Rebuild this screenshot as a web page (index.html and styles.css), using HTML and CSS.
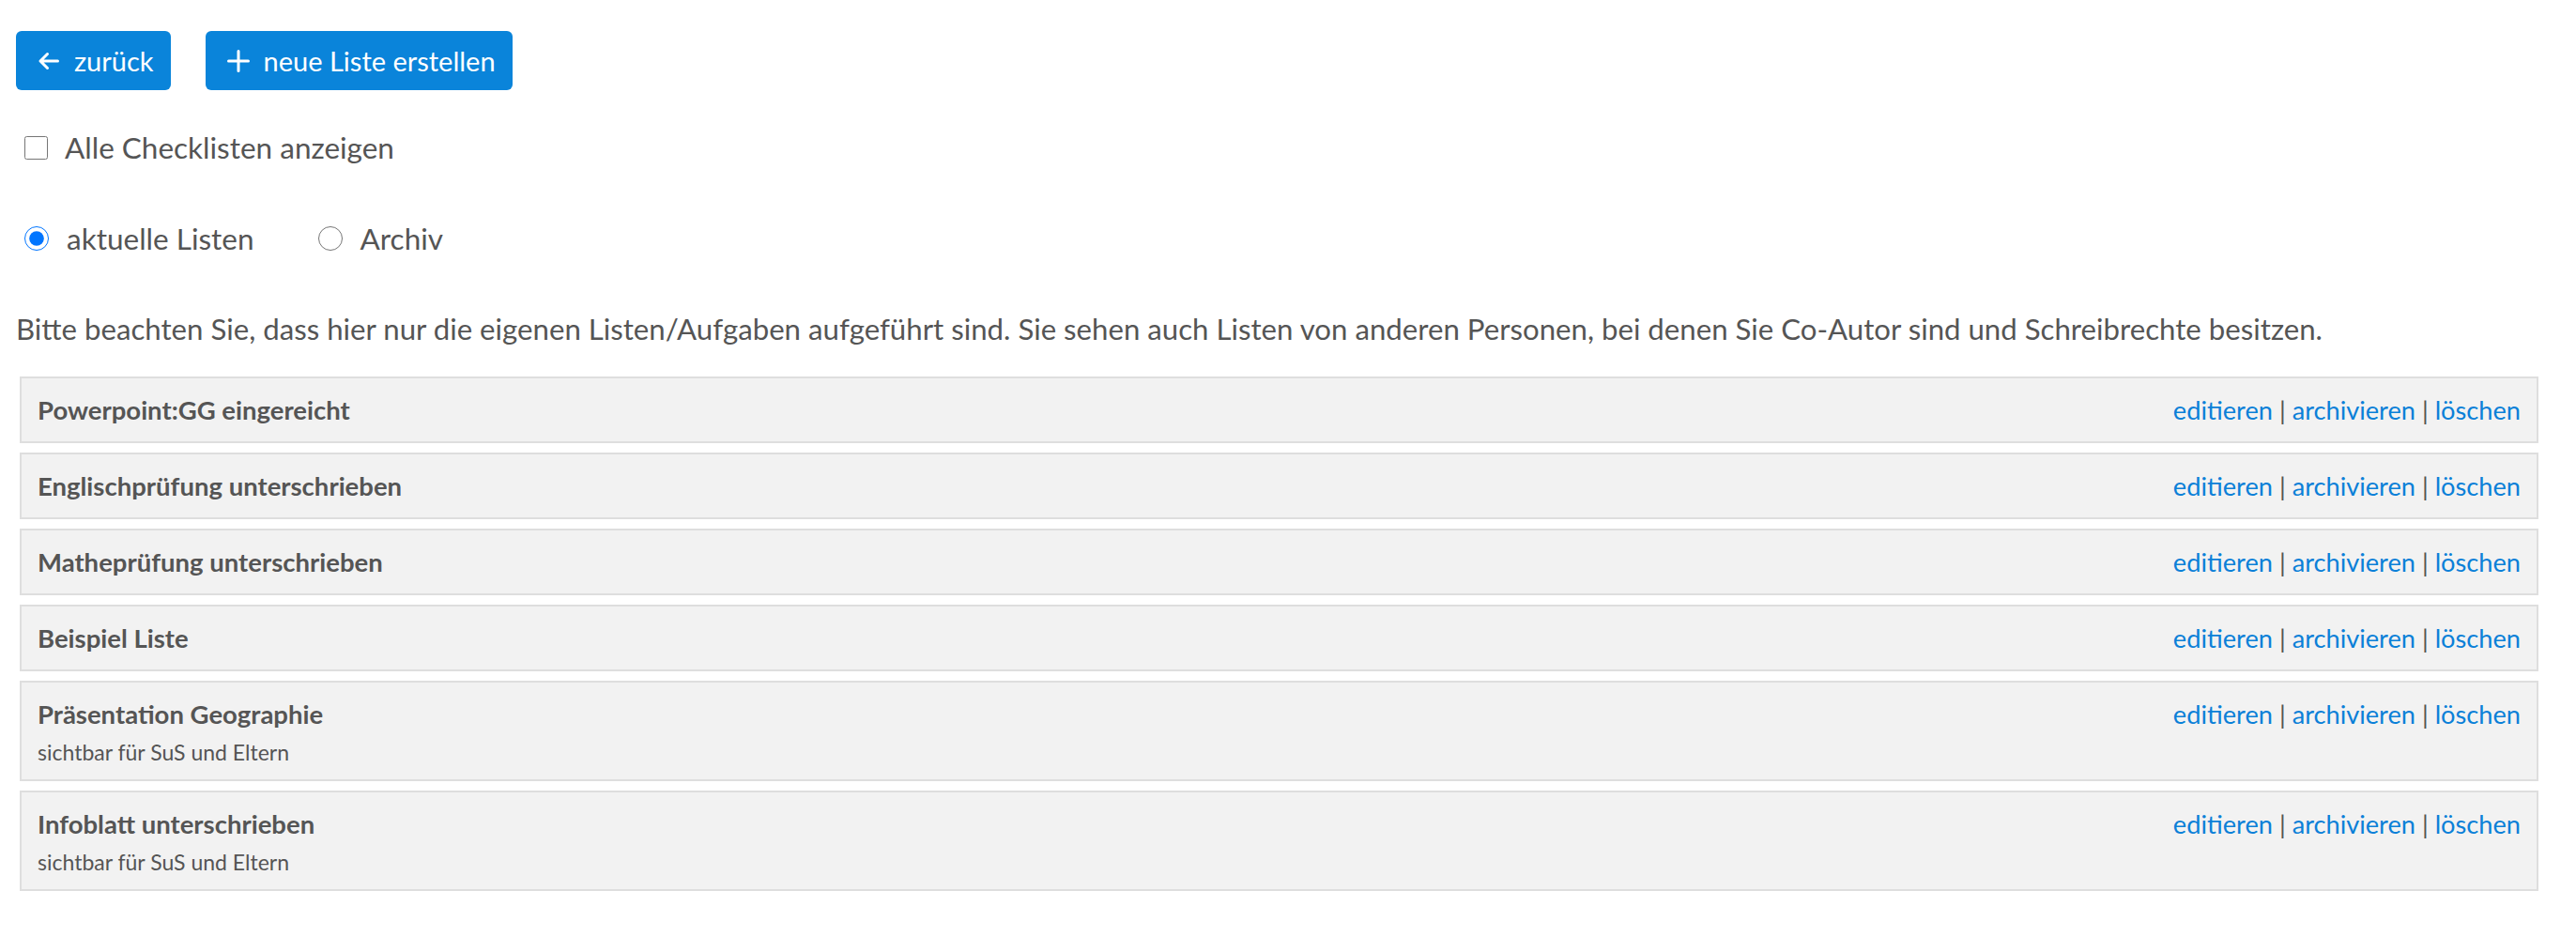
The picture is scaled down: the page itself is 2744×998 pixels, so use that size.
FILE: index.html
```html
<!DOCTYPE html>
<html lang="de">
<head>
<meta charset="utf-8">
<title>Checklisten</title>
<link rel="stylesheet" href="styles.css">
</head>
<body>
<div class="page">
  <div class="actions">
    <button class="btn">
      <svg class="ico" viewBox="0 0 24 24" width="24" height="24"><path d="M21.5 12H3M10.5 4.5L3 12l7.5 7.5" fill="none" stroke="#fff" stroke-width="3" stroke-linecap="round" stroke-linejoin="round"/></svg>
      <span>zurück</span>
    </button>
    <button class="btn">
      <svg class="ico" viewBox="0 0 24 24" width="24" height="24"><path d="M12 1.5v21M1.5 12h21" fill="none" stroke="#fff" stroke-width="3" stroke-linecap="round"/></svg>
      <span>neue Liste erstellen</span>
    </button>
  </div>

  <label class="check"><input type="checkbox" class="box"> Alle Checklisten anzeigen</label>

  <div class="radios">
    <label class="radio"><input type="radio" name="r" class="rad" checked> aktuelle Listen</label>
    <label class="radio"><input type="radio" name="r" class="rad"> Archiv</label>
  </div>

  <p class="note">Bitte beachten Sie, dass hier nur die eigenen Listen/Aufgaben aufgeführt sind. Sie sehen auch Listen von anderen Personen, bei denen Sie Co-Autor sind und Schreibrechte besitzen.</p>

  <div class="list">
    <div class="item">
      <div class="info"><div class="title">Powerpoint:GG eingereicht</div></div>
      <div class="links"><a href="#">editieren</a> | <a href="#">archivieren</a> | <a href="#">löschen</a></div>
    </div>
    <div class="item">
      <div class="info"><div class="title">Englischprüfung unterschrieben</div></div>
      <div class="links"><a href="#">editieren</a> | <a href="#">archivieren</a> | <a href="#">löschen</a></div>
    </div>
    <div class="item">
      <div class="info"><div class="title">Matheprüfung unterschrieben</div></div>
      <div class="links"><a href="#">editieren</a> | <a href="#">archivieren</a> | <a href="#">löschen</a></div>
    </div>
    <div class="item">
      <div class="info"><div class="title">Beispiel Liste</div></div>
      <div class="links"><a href="#">editieren</a> | <a href="#">archivieren</a> | <a href="#">löschen</a></div>
    </div>
    <div class="item">
      <div class="info"><div class="title">Präsentation Geographie</div><div class="sub">sichtbar für SuS und Eltern</div></div>
      <div class="links"><a href="#">editieren</a> | <a href="#">archivieren</a> | <a href="#">löschen</a></div>
    </div>
    <div class="item">
      <div class="info"><div class="title">Infoblatt unterschrieben</div><div class="sub">sichtbar für SuS und Eltern</div></div>
      <div class="links"><a href="#">editieren</a> | <a href="#">archivieren</a> | <a href="#">löschen</a></div>
    </div>
  </div>
</div>
</body>
</html>
```
FILE: styles.css
```css
html, body {
  margin: 0;
  background: #fff;
}
body {
  font-family: Lato, "Open Sans", sans-serif;
  color: #555;
  font-size: 31.5px;
}
.page {
  padding: 33px 40px 40px 17px;
}
.actions {
  display: flex;
  gap: 37px;
}
.btn {
  display: flex;
  align-items: center;
  gap: 15px;
  height: 63px;
  padding: 0 18px 0 23px;
  border: 0;
  border-radius: 6px;
  background: #0a84da;
  color: #fff;
  font-family: inherit;
  font-size: 29px;
}
.ico { display: block; width: 24px; height: 24px; }
.check {
  display: flex;
  align-items: center;
  gap: 18px;
  height: 40px;
  margin-top: 41px;
  padding-left: 9px;
}
.box {
  margin: 0;
  width: 25px;
  height: 25px;
}
.radios {
  display: flex;
  gap: 68px;
  margin-top: 57px;
  padding-left: 9px;
}
.radio {
  display: flex;
  align-items: center;
  gap: 19px;
  height: 40px;
}
.rad {
  margin: 0;
  width: 26px;
  height: 26px;
}
.note {
  margin: 56px 0 31px;
  font-size: 31.2px;
  line-height: 40px;
}
.list {
  display: flex;
  flex-direction: column;
  gap: 10px;
  margin-left: 4px;
}
.item {
  display: flex;
  justify-content: space-between;
  align-items: flex-start;
  background: #f2f2f2;
  border: 2px solid #dedede;
  padding: 13.5px 17px;
}
.title {
  font-weight: bold;
  font-size: 27.5px;
  line-height: 40px;
}
.sub {
  font-size: 23px;
  line-height: 31px;
  margin-top: 5px;
}
.links {
  font-size: 27.2px;
  line-height: 40px;
  color: #555;
}
.links a {
  color: #0b80d8;
  text-decoration: none;
}
```
